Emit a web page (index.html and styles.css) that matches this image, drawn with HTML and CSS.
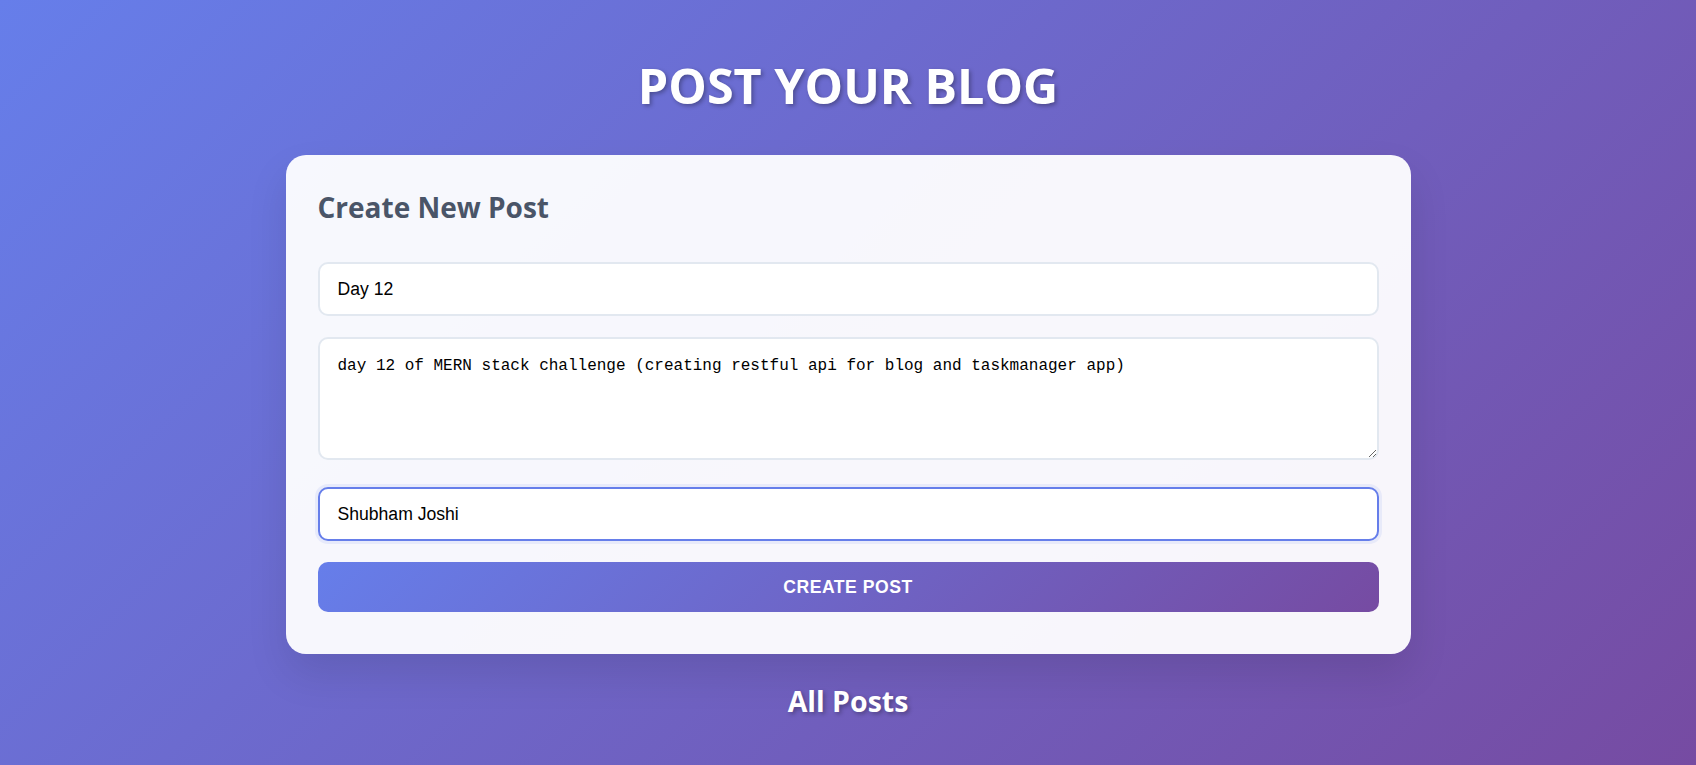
FILE: index.html
```html
<!DOCTYPE html>
<html lang="en">
<head>
<meta charset="utf-8">
<title>Post Your Blog</title>
<link rel="stylesheet" href="styles.css">
</head>
<body>
  <main class="page">
    <h1 class="page-title">POST YOUR BLOG</h1>
    <section class="card">
      <h2 class="card-title">Create New Post</h2>
      <form class="post-form">
        <input class="field" type="text" value="Day 12" placeholder="Title">
        <textarea class="field field-area" placeholder="Content">day 12 of MERN stack challenge (creating restful api for blog and taskmanager app)</textarea>
        <input class="field is-focused" type="text" value="Shubham Joshi" placeholder="Author">
        <button class="submit" type="button">Create Post</button>
      </form>
    </section>
    <h2 class="section-title">All Posts</h2>
  </main>
</body>
</html>
```

FILE: styles.css
```css
* {
  box-sizing: border-box;
}

html, body {
  margin: 0;
  padding: 0;
}

body {
  min-height: 100vh;
  background: linear-gradient(135deg, #667eea 0%, #764ba2 100%);
  font-family: "Open Sans", "Noto Sans", sans-serif;
  overflow: hidden;
}

.page {
  width: 1125px;
  margin: 0 auto;
  padding-top: 55px;
  display: flex;
  flex-direction: column;
}

.page-title {
  margin: 0 0 40px;
  text-align: center;
  color: #fff;
  font-size: 48.5px;
  line-height: 60px;
  font-weight: 700;
  text-shadow: 2px 2px 4px rgba(0, 0, 0, 0.3);
}

.card {
  background: rgba(255, 255, 255, 0.95);
  border-radius: 20px;
  padding: 32px 32px 42px;
  box-shadow: 0 20px 40px rgba(0, 0, 0, 0.1);
}

.card-title {
  margin: 0 0 35px;
  color: #4a5568;
  font-size: 28px;
  line-height: 40px;
  font-weight: 700;
}

.post-form {
  display: flex;
  flex-direction: column;
  gap: 21px;
}

.field {
  display: block;
  width: 100%;
  height: 53.5px;
  margin: 0;
  padding: 2px 18px 0;
  border: 2px solid #e2e8f0;
  border-radius: 10px;
  background: #fff;
  color: #000;
  font-family: "Liberation Sans", Arial, sans-serif;
  font-size: 17.6px;
  line-height: 20px;
  outline: none;
}

.field-area {
  height: 123.5px;
  margin-bottom: 6px;
  padding: 17px 18px 13px;
  font-family: "Liberation Mono", monospace;
  font-size: 16px;
  line-height: 20px;
  resize: vertical;
}

.is-focused {
  border-color: #667eea;
  box-shadow: 0 0 0 3px rgba(102, 126, 234, 0.1);
}

.submit {
  display: block;
  width: 100%;
  height: 50.4px;
  padding: 0 15px;
  border: none;
  border-radius: 10px;
  background: linear-gradient(135deg, #667eea 0%, #764ba2 100%);
  color: #fff;
  font-family: "Liberation Sans", Arial, sans-serif;
  font-size: 17.6px;
  line-height: 20px;
  font-weight: 700;
  text-transform: uppercase;
  letter-spacing: 0.5px;
  cursor: pointer;
}

.section-title {
  margin: 27px 0 0;
  text-align: center;
  color: #fff;
  font-size: 28.5px;
  line-height: 40px;
  font-weight: 700;
  text-shadow: 2px 2px 4px rgba(0, 0, 0, 0.3);
}
```
